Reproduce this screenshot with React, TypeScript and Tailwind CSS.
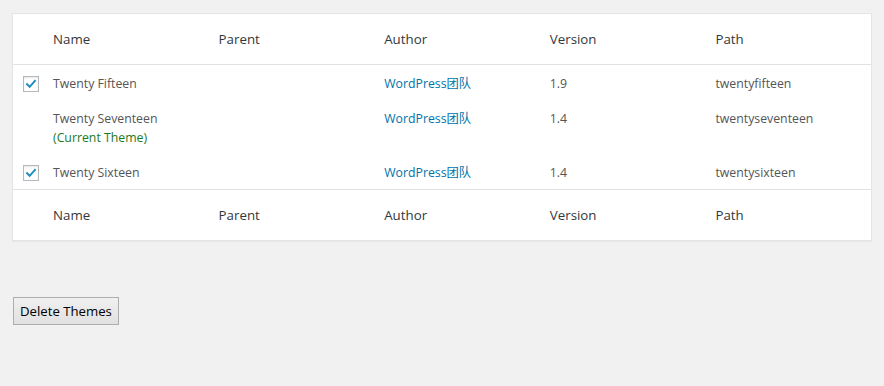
import React from "react";

const font = { fontFamily: '"Open Sans", "Noto Sans CJK SC", sans-serif' };

function Check() {
  return (
    <span className="flex h-4 w-4 items-center justify-center border border-[#b4b9be] bg-white shadow-[inset_0_1px_2px_rgba(0,0,0,0.1)]">
      <svg viewBox="0 0 16 16" className="h-4 w-4">
        <path d="M3.5 8.2 L6.5 11.2 L12.5 4.5" fill="none" stroke="#1e8cbe" strokeWidth="2.2" strokeLinecap="square" />
      </svg>
    </span>
  );
}

const rows = [
  { name: "Twenty Fifteen", checked: true, version: "1.9", path: "twentyfifteen" },
  { name: "Twenty Seventeen", current: true, checked: false, version: "1.4", path: "twentyseventeen" },
  { name: "Twenty Sixteen", checked: true, version: "1.4", path: "twentysixteen" },
];

function HeadRow({ top }: { top?: boolean }) {
  return (
    <div className={`grid grid-cols-[30px_repeat(5,1fr)] text-[13.3px] leading-[20px] text-[#32373c] ${top ? "border-b border-[#e1e1e1]" : "border-t border-[#e1e1e1]"}`}>
      <div />
      {["Name", "Parent", "Author", "Version", "Path"].map((h) => (
        <div key={h} className="px-[10px] py-[15px]">{h}</div>
      ))}
    </div>
  );
}

export default function App() {
  return (
    <div className="min-h-[386px] w-full bg-[#f1f1f1] pr-[12px] pt-[13px]" style={font}>
      <div className="ml-[12px] border border-[#e5e5e5] bg-white shadow-[0_1px_1px_rgba(0,0,0,0.04)]">
        <HeadRow top />
        {rows.map((r) => (
          <div key={r.name} className="grid grid-cols-[30px_repeat(5,1fr)] text-[12.3px] leading-[19px] text-[#555]">
            <div className="pl-[10px] pt-[11px]">{r.checked && <Check />}</div>
            <div className="px-[10px] pb-[7px] pt-[9px]">
              <div>{r.name}</div>
              {r.current && <div className="text-[#1a7a1a]">(Current Theme)</div>}
            </div>
            <div className="px-[10px] pb-[7px] pt-[9px]"></div>
            <div className="px-[10px] pb-[7px] pt-[9px] text-[#0073aa]">WordPress团队</div>
            <div className="px-[10px] pb-[7px] pt-[9px]">{r.version}</div>
            <div className="px-[10px] pb-[7px] pt-[9px]">{r.path}</div>
          </div>
        ))}
        <HeadRow />
      </div>
      <div className="pl-[13px] pt-[56px]">
        <button className="h-[28px] border border-[#adadad] bg-gradient-to-b from-[#f0f0f0] to-[#e1e1e1] px-[6px] text-[13.2px] leading-[20px] text-black" style={font}>
          Delete Themes
        </button>
      </div>
    </div>
  );
}
